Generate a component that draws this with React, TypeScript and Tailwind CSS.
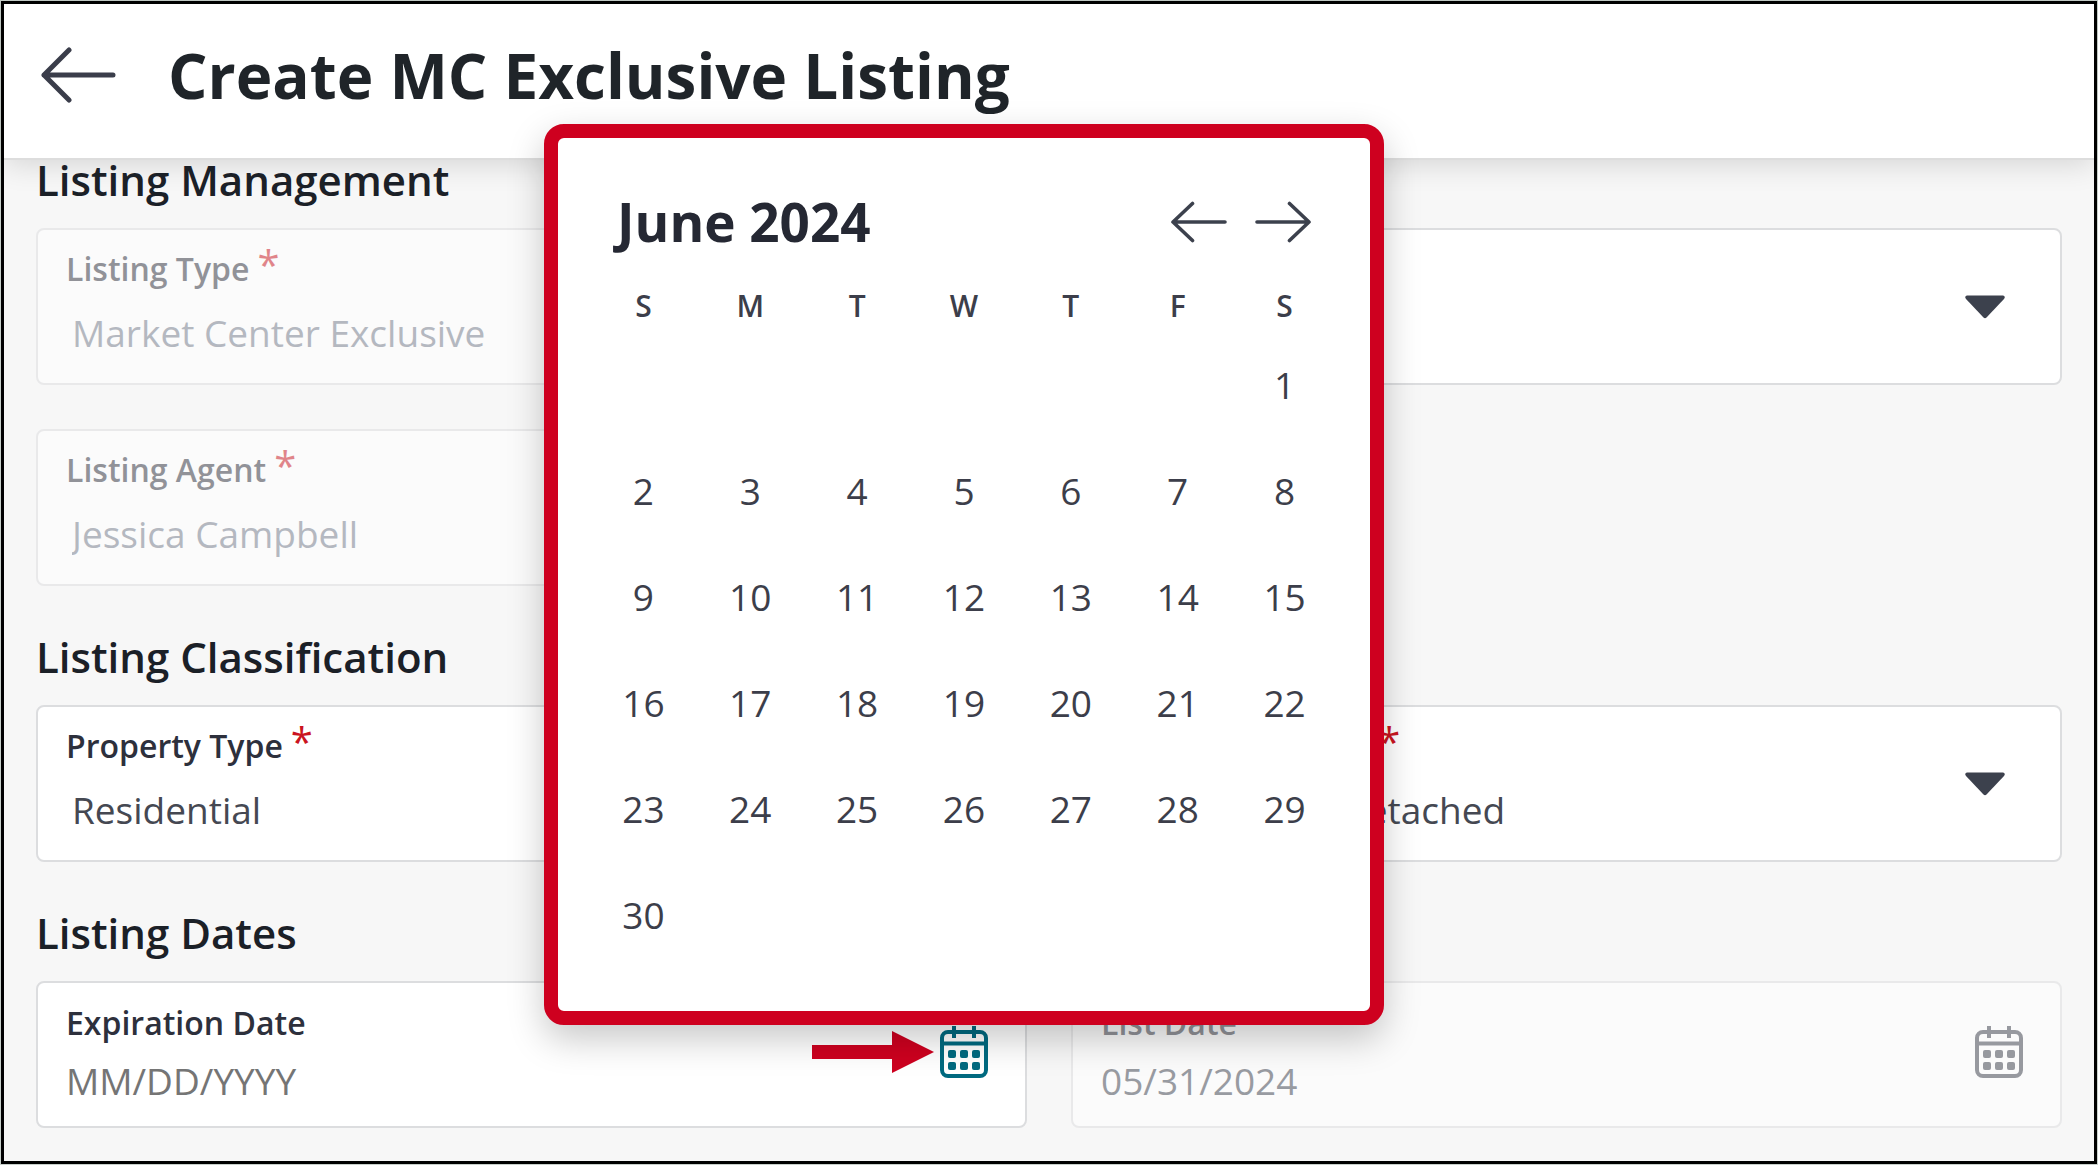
import React, { ReactNode } from 'react'

type FieldProps = {
  id: string
  label: string
  required?: boolean
  disabled?: boolean
}

type SelectFieldProps = FieldProps & {
  value: string
  caret?: boolean
}

type DateFieldProps = FieldProps & {
  value?: string
  placeholder?: string
  children?: ReactNode
}

const weekDays = ['S', 'M', 'T', 'W', 'T', 'F', 'S']

// June 2024 starts on a Saturday
const weeks = [
  [0, 0, 0, 0, 0, 0, 1],
  [2, 3, 4, 5, 6, 7, 8],
  [9, 10, 11, 12, 13, 14, 15],
  [16, 17, 18, 19, 20, 21, 22],
  [23, 24, 25, 26, 27, 28, 29],
  [30, 0, 0, 0, 0, 0, 0],
]

const ArrowIcon = ({ className }: { className: string }) => (
  <svg viewBox="0 0 56 42" fill="none" stroke="currentColor" strokeWidth="3.6" strokeLinecap="round" strokeLinejoin="round" className={className}>
    <path d="M54 21H2M21.500 2.500L2 21l19.500 18.500" />
  </svg>
)

const BackIcon = () => (
  <svg viewBox="0 0 76 56" fill="none" stroke="currentColor" strokeWidth="5" strokeLinecap="round" strokeLinejoin="round" className="h-14 w-[76px]">
    <path d="M73 28H4M29 3L4 28l25 25" />
  </svg>
)

const CalendarIcon = () => (
  <svg viewBox="0 0 50 52" fill="none" stroke="currentColor" strokeWidth="4" className="h-[52px] w-[50px]">
    <rect x="3" y="6" width="44" height="44" rx="6" />
    <path d="M3 17.500h44M15 0v12M35 0v12" />
    <g fill="currentColor" stroke="none">
      <rect x="9" y="24" width="8" height="8" rx="2" />
      <rect x="21" y="24" width="8" height="8" rx="2" />
      <rect x="33" y="24" width="8" height="8" rx="2" />
      <rect x="9" y="36" width="8" height="8" rx="2" />
      <rect x="21" y="36" width="8" height="8" rx="2" />
      <rect x="33" y="36" width="8" height="8" rx="2" />
    </g>
  </svg>
)

const CaretIcon = () => (
  <svg viewBox="0 0 42 24" className="pointer-events-none absolute right-[54px] top-1/2 h-6 w-[42px] -translate-y-1/2 text-[#3c414d]">
    <path d="M3 0.500h36q3 1 1 3.500L22.500 22.500q-1.500 1.500-3 0L2 4Q0 1.500 3 0.500z" fill="currentColor" />
  </svg>
)

const FieldLabel = ({ id, label, required }: FieldProps) => (
  <label htmlFor={id} className="flex h-10 gap-2 text-[32px] leading-10 font-semibold text-[#2d303c]">
    {label}
    {required && <span className="text-[40px] font-normal leading-8 text-[#cb1420]">*</span>}
  </label>
)

const SelectField = ({ id, label, required, disabled, value, caret }: SelectFieldProps) => (
  <div className={`relative rounded-lg border-2 border-[#dcdddf] bg-white px-7 pt-[19px] pb-[26px] ${disabled ? 'opacity-50' : ''}`}>
    <FieldLabel id={id} label={label} required={required} />
    <select
      id={id}
      disabled={disabled}
      className={`mt-5 block h-12 w-full appearance-none bg-transparent pl-1.5 text-[37px] leading-12 opacity-100 outline-none ${disabled ? 'text-[#747a8a]' : 'text-[#454852]'}`}
    >
      <option>{value}</option>
    </select>
    {caret && <CaretIcon />}
  </div>
)

const DateField = ({ id, label, disabled, value, placeholder, children }: DateFieldProps) => (
  <div className={`relative rounded-lg border-2 border-[#dcdddf] bg-white px-7 pt-5 pb-[21px] ${disabled ? 'opacity-50' : ''}`}>
    <FieldLabel id={id} label={label} />
    <input
      id={id}
      type="text"
      disabled={disabled}
      defaultValue={value}
      placeholder={placeholder}
      className="mt-3.5 block h-12 w-full bg-transparent text-[37px] leading-12 text-[#3c414d] outline-none placeholder:text-[#757575]"
    />
    <div className="absolute right-9 bottom-12">
      <button
        type="button"
        aria-label={`Choose ${label}`}
        disabled={disabled}
        className={`block ${disabled ? 'text-[#3a3d4a]' : 'text-[#006a80]'}`}
      >
        <CalendarIcon />
      </button>
      {children}
    </div>
  </div>
)

const DatePicker = () => (
  <section
    aria-label="Choose expiration date"
    className="absolute bottom-full left-1/2 z-20 mb-px w-[840px] -translate-x-1/2 rounded-[20px] border-14 border-[#ce001f] bg-white px-8 pt-[54px] pb-[43px] shadow-[0_14px_36px_rgba(0,0,0,0.22)]"
  >
    <div className="flex items-center justify-between pr-[27px] pl-[27px]">
      <h2 className="text-[53px] leading-[60px] font-bold text-[#252833]">June 2024</h2>
      <div className="flex gap-7 text-[#3c414d]">
        <button type="button" aria-label="Previous month">
          <ArrowIcon className="h-[42px] w-14" />
        </button>
        <button type="button" aria-label="Next month">
          <ArrowIcon className="h-[42px] w-14 rotate-180" />
        </button>
      </div>
    </div>

    <table className="mt-[26px] w-full table-fixed text-center text-[#3c3e4a]">
      <thead>
        <tr className="h-[54px] text-[30px]">
          {weekDays.map((day, i) => (
            <th key={i} className="p-0 font-semibold">{day}</th>
          ))}
        </tr>
      </thead>
      <tbody>
        {weeks.map((week, i) => (
          <tr key={i} className="h-[106px] text-[37px]">
            {week.map((day, j) => (
              <td key={j} className="p-0">
                {day > 0 && <button type="button">{day}</button>}
              </td>
            ))}
          </tr>
        ))}
      </tbody>
    </table>
  </section>
)

const SectionTitle = ({ children }: { children: ReactNode }) => (
  <h2 className="mb-7 text-[42px] leading-10 font-semibold text-[#1b2027]">{children}</h2>
)

const App = () => {
  return (
    <div className="min-h-screen bg-[#c8d0cb] p-px font-['Open_Sans',sans-serif]">
      <div className="min-h-[calc(100vh-2px)] border-3 border-black bg-[#f7f7f7]">
        <header className="relative z-10 flex h-[156px] items-center gap-[52px] border-b-2 border-[#dddddd] bg-white px-9 pb-3 shadow-[0_4px_28px_rgba(0,0,0,0.14)]">
          <button type="button" aria-label="Back" className="text-[#3a3d4a]">
            <BackIcon />
          </button>
          <h1 className="text-[62px] leading-[72px] font-bold text-[#1f2429]">Create MC Exclusive Listing</h1>
        </header>

        <main className="relative z-10 px-8 pb-8">
          <section>
            <SectionTitle>Listing Management</SectionTitle>
            <div className="grid grid-cols-2 gap-11">
              <SelectField id="listing-type" label="Listing Type" required disabled value="Market Center Exclusive" />
              <SelectField id="listing-office" label="Office" value="" caret />
              <SelectField id="listing-agent" label="Listing Agent" required disabled value="Jessica Campbell" />
            </div>
          </section>

          <section className="mt-[51px]">
            <SectionTitle>Listing Classification</SectionTitle>
            <div className="grid grid-cols-2 gap-11">
              <SelectField id="property-type" label="Property Type" required value="Residential" />
              <SelectField id="property-subtype" label="Property Subtype" required value="Single Family Detached" caret />
            </div>
          </section>

          <section className="mt-[51px]">
            <SectionTitle>Listing Dates</SectionTitle>
            <div className="grid grid-cols-2 gap-11">
              {/* keeps the picker above the neighbouring field */}
              <div className="relative z-20">
                <DateField id="expiration-date" label="Expiration Date" placeholder="MM/DD/YYYY">
                  <DatePicker />
                  <svg viewBox="0 0 122 42" className="absolute top-[5px] right-full mr-[5px] h-[42px] w-[122px] max-w-none text-[#ce001f]">
                    <path d="M0 14h80V0l42 21-42 21V28H0z" fill="currentColor" />
                  </svg>
                </DateField>
              </div>
              <DateField id="list-date" label="List Date" disabled value="05/31/2024" />
            </div>
          </section>
        </main>
      </div>
    </div>
  )
}

export default App
